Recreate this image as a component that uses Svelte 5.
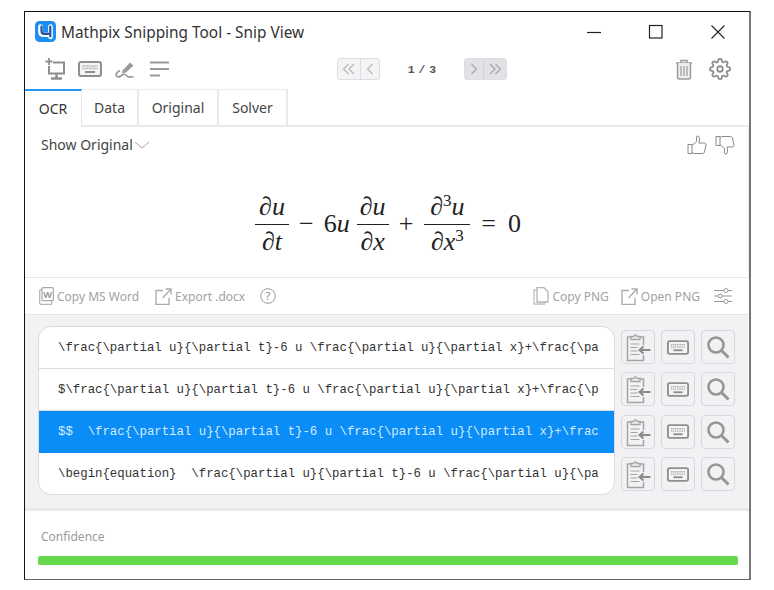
<script>
  const rows = [
    { text: "\\frac{\\partial u}{\\partial t}-6 u \\frac{\\partial u}{\\partial x}+\\frac{\\pa", active: false },
    { text: "$\\frac{\\partial u}{\\partial t}-6 u \\frac{\\partial u}{\\partial x}+\\frac{\\p", active: false },
    { text: "$$  \\frac{\\partial u}{\\partial t}-6 u \\frac{\\partial u}{\\partial x}+\\frac", active: true },
    { text: "\\begin{equation}  \\frac{\\partial u}{\\partial t}-6 u \\frac{\\partial u}{\\pa", active: false }
  ];
  const tabs = ["OCR", "Data", "Original", "Solver"];
</script>

{#snippet keyboard(w, h)}
  <svg width={w} height={h} viewBox="0 0 24 16" class="ic">
    <rect x="1" y="1" width="22" height="14" rx="2" fill="#f4f4f6" stroke="#8e8e8e" stroke-width="2"/>
    <path d="M4.500 5h15M4.500 7.500h15" stroke="#a5a5a5" stroke-width="1.400" stroke-dasharray="1.200 .8"/>
    <path d="M7 11h10" stroke="#8e8e8e" stroke-width="2"/>
  </svg>
{/snippet}

<div class="window">
  <header class="title">
    <svg width="21" height="21" viewBox="0 0 21 21" class="logo">
      <rect width="21" height="21" rx="4.500" fill="#1e8ff2"/>
      <path d="M5.500 5.500v5q0 3.200 3.200 3.200h7M15.500 5.500V16" fill="none" stroke="#fff" stroke-width="4.600" stroke-linecap="round"/>
      <path d="M6.500 5.500v4.500q0 2.800 2.800 2.800h6M15.300 5.500V15.500" fill="none" stroke="#27529e" stroke-width="2.200" stroke-linecap="round"/>
    </svg>
    <span class="title-text">Mathpix Snipping Tool - Snip View</span>
    <div class="win-btns">
      <svg width="16" height="16" viewBox="0 0 16 16"><path d="M1 8.500h14" stroke="#222" stroke-width="1.200"/></svg>
      <svg width="16" height="16" viewBox="0 0 16 16"><rect x="1.500" y="1.500" width="12.500" height="12.500" fill="none" stroke="#222" stroke-width="1.200"/></svg>
      <svg width="16" height="16" viewBox="0 0 16 16"><path d="M1.500 1.500l13 13M14.500 1.500l-13 13" stroke="#222" stroke-width="1.100"/></svg>
    </div>
  </header>

  <div class="toolbar">
    <div class="tools">
      <svg width="21" height="22" viewBox="0 0 21 22">
        <path d="M5 0v7M1.500 3.500h7" stroke="#8e8e8e" stroke-width="1.800"/>
        <path d="M9 4.500h11v11H5V8" fill="none" stroke="#8e8e8e" stroke-width="2"/>
        <path d="M12.500 15.500v4M7 20.500h11" stroke="#8e8e8e" stroke-width="2.400"/>
      </svg>
      {@render keyboard(24, 16)}
      <svg width="20" height="20" viewBox="0 0 20 20">
        <path d="M7.500 11.500L15 3.500l3.500 3-7.500 7-4 1z" fill="#9a9a9a"/>
        <path d="M5 11.500Q0 14 1.500 17q2 2 5-.5t5 0 7 1" fill="none" stroke="#9a9a9a" stroke-width="1.700"/>
      </svg>
      <svg width="20" height="16" viewBox="0 0 20 16" class="lines">
        <path d="M0 1.500h19M0 8h19M0 14.500h10" stroke="#9a9a9a" stroke-width="2"/>
      </svg>
    </div>
    <div class="pager">
      <div class="pgroup">
        <span class="pb wide"><svg width="14" height="12" viewBox="0 0 14 12"><path d="M6.500 1L1.500 6l5 5M12 1L7 6l5 5" fill="none" stroke="#b5b5b5" stroke-width="1.100"/></svg></span>
        <span class="pb"><svg width="8" height="12" viewBox="0 0 8 12"><path d="M6.500 1L1.500 6l5 5" fill="none" stroke="#b5b5b5" stroke-width="1.100"/></svg></span>
      </div>
      <span class="count">1 / 3</span>
      <div class="pgroup on">
        <span class="pb"><svg width="8" height="12" viewBox="0 0 8 12"><path d="M1.500 1l5 5-5 5" fill="none" stroke="#a5a5a5" stroke-width="1.100"/></svg></span>
        <span class="pb wide"><svg width="14" height="12" viewBox="0 0 14 12"><path d="M2 1l5 5-5 5M7.500 1l5 5-5 5" fill="none" stroke="#a5a5a5" stroke-width="1.100"/></svg></span>
      </div>
    </div>
    <div class="tools right">
      <svg width="18" height="22" viewBox="0 0 18 22">
        <path d="M1 5h16M6 5V2.500h6V5" fill="none" stroke="#9a9a9a" stroke-width="1.500"/>
        <path d="M2.500 5v14q0 2 2 2h9q2 0 2-2V5" fill="#eee" stroke="#9a9a9a" stroke-width="1.500"/>
        <path d="M6 8v10M9 8v10M12 8v10" stroke="#9a9a9a" stroke-width="1.200"/>
      </svg>
      <svg width="22" height="22" viewBox="0 0 24 24" fill="none" stroke="#8e8e8e" stroke-width="2">
        <circle cx="12" cy="12" r="3"/>
        <path d="M19.400 15a1.650 1.650 0 0 0 .33 1.820l.06.06a2 2 0 0 1 0 2.830 2 2 0 0 1-2.830 0l-.06-.06a1.650 1.650 0 0 0-1.820-.33 1.650 1.650 0 0 0-1 1.510V21a2 2 0 0 1-2 2 2 2 0 0 1-2-2v-.09A1.650 1.650 0 0 0 9 19.400a1.650 1.650 0 0 0-1.820.33l-.06.06a2 2 0 0 1-2.830 0 2 2 0 0 1 0-2.830l.06-.06a1.650 1.650 0 0 0 .33-1.820 1.650 1.650 0 0 0-1.510-1H3a2 2 0 0 1-2-2 2 2 0 0 1 2-2h.09A1.650 1.650 0 0 0 4.600 9a1.650 1.650 0 0 0-.33-1.820l-.06-.06a2 2 0 0 1 0-2.830 2 2 0 0 1 2.830 0l.06.06a1.650 1.650 0 0 0 1.820.33H9a1.650 1.650 0 0 0 1-1.510V3a2 2 0 0 1 2-2 2 2 0 0 1 2 2v.09a1.650 1.650 0 0 0 1 1.510 1.650 1.650 0 0 0 1.820-.33l.06-.06a2 2 0 0 1 2.830 0 2 2 0 0 1 0 2.830l-.06.06a1.650 1.650 0 0 0-.33 1.820V9a1.650 1.650 0 0 0 1.510 1H21a2 2 0 0 1 2 2 2 2 0 0 1-2 2h-.09a1.650 1.650 0 0 0-1.510 1z"/>
      </svg>
    </div>
  </div>

  <nav class="tabs">
    {#each tabs as tab, i}
      <span class="tab t{i}" class:active={i === 0}>{tab}</span>
    {/each}
  </nav>

  <section class="preview">
    <div class="show-row">
      <span class="show">Show Original</span>
      <svg width="16" height="8" viewBox="0 0 16 8" class="chev"><path d="M1 1l7 6 7-6" fill="none" stroke="#aaa" stroke-width="1"/></svg>
      <div class="thumbs">
        <svg width="20" height="20" viewBox="0 0 20 20"><path d="M1 9.500h4v9H1zM5 10.500l4.500-4V2q0-1 1.300-1 1.700 0 1.700 3l-.5 4h5.500q1.500 0 1.500 1.500l-1.500 7.500q-.5 1.500-2 1.500H8q-2 0-3-1" fill="none" stroke="#8a8a8a" stroke-width="1"/></svg>
        <svg width="20" height="20" viewBox="0 0 20 20"><path d="M1 1.500h4v9H1zM5 9.500l4.500 4V18q0 1 1.300 1 1.700 0 1.700-3l-.5-4h5.500q1.500 0 1.500-1.500L17.500 3q-.5-1.500-2-1.500H8q-2 0-3 1" fill="none" stroke="#8a8a8a" stroke-width="1"/></svg>
      </div>
    </div>
    <div class="math">
      <span class="frac f1"><span><i>∂u</i></span><span><i>∂t</i></span></span>
      <span class="op minus">−</span>
      <span class="term">6<i>u</i></span>
      <span class="frac f2"><span><i>∂u</i></span><span><i>∂x</i></span></span>
      <span class="op plus">+</span>
      <span class="frac f3"><span><i>∂</i><sup>3</sup><i>u</i></span><span><i>∂x</i><sup>3</sup></span></span>
      <span class="op eq">=</span>
      <span class="term">0</span>
    </div>
  </section>

  <div class="actions">
    <span class="act first">
      <svg width="15" height="18" viewBox="0 0 15 18"><rect x=".7" y="2.500" width="12" height="15" rx="1.500" fill="none" stroke="#b5b5b5" stroke-width="1.300"/><rect x="3" y=".7" width="11.300" height="13" rx="1" fill="#fff" stroke="#a8a8a8" stroke-width="1.200"/><text x="8.700" y="11" class="w">W</text></svg>
      Copy MS Word
    </span>
    <span class="act export">
      <svg width="17" height="17" viewBox="0 0 17 17"><path d="M8 2.500H1v14h13V10M7.500 10L16 1M10.500 1H16v5.500" fill="none" stroke="#adadad" stroke-width="1.400"/></svg>
      Export .docx
    </span>
    <svg width="16" height="16" viewBox="0 0 16 16" class="help"><circle cx="8" cy="8" r="7.300" fill="none" stroke="#999" stroke-width="1"/><text x="8" y="11.500" class="q">?</text></svg>
    <span class="act push">
      <svg width="16" height="18" viewBox="0 0 16 18"><path d="M4.500 3H1v14h10.500v-2" fill="none" stroke="#c0c0c0" stroke-width="1.300"/><path d="M4 .7h7l4 4V15H4z" fill="#fff" stroke="#b5b5b5" stroke-width="1.300"/></svg>
      Copy PNG
    </span>
    <span class="act open">
      <svg width="17" height="17" viewBox="0 0 17 17"><path d="M8 2.500H1v14h13V10M7.500 10L16 1M10.500 1H16v5.500" fill="none" stroke="#adadad" stroke-width="1.400"/></svg>
      Open PNG
    </span>
    <svg width="18" height="16" viewBox="0 0 18 16" class="sliders">
      <path d="M0 2.500h10M14 2.500h4M0 8h4M8 8h10M0 13.500h10M14 13.500h4" stroke="#999" stroke-width="1"/>
      <circle cx="12" cy="2.500" r="2" fill="none" stroke="#999"/><circle cx="6" cy="8" r="2" fill="none" stroke="#999"/><circle cx="12" cy="13.500" r="2" fill="none" stroke="#999"/>
    </svg>
  </div>

  <section class="results">
    <div class="list">
      {#each rows as row}
        <div class="row" class:active={row.active}>{row.text}</div>
      {/each}
    </div>
    <div class="btns">
      {#each rows as row}
        <div class="btn-row">
          <span class="ibtn">
            <svg width="26" height="30" viewBox="0 0 26 30">
              <path d="M6.500 5H2.500v23.500h16V23M18.500 13V5h-4" fill="none" stroke="#a5a5a5" stroke-width="1.500"/>
              <path d="M6 7.500V4.500h3q1.500-3.500 3 0h3v3z" fill="#f0f0f2" stroke="#a5a5a5" stroke-width="1.300"/>
              <path d="M5.500 12h9M5.500 15.500h7M5.500 19h7M5.500 22.500h9" stroke="#a5a5a5" stroke-width="1.200"/>
              <path d="M25.500 18H14.500M18.500 14.500l-4 3.500 4 3.500" fill="none" stroke="#8a8a8a" stroke-width="2"/>
            </svg>
          </span>
          <span class="ibtn">{@render keyboard(22, 15)}</span>
          <span class="ibtn">
            <svg width="24" height="24" viewBox="0 0 24 24">
              <circle cx="10" cy="10" r="7.500" fill="none" stroke="#969696" stroke-width="2.600"/>
              <path d="M15.500 15.500L22.500 22.500" stroke="#969696" stroke-width="3"/>
            </svg>
          </span>
        </div>
      {/each}
    </div>
  </section>

  <section class="conf">
    <div class="conf-label">Confidence</div>
    <div class="bar"></div>
  </section>
</div>

<style>
  :global(body) { margin: 0; background: #fff; }
  .window {
    box-sizing: border-box;
    width: 727px;
    height: 569px;
    margin: 11px 0 0 24px;
    border: 1px solid #111;
    border-right: 2px solid #777;
    border-bottom: 1px solid #666;
    background: #fff;
    font-family: "Noto Sans", sans-serif;
    color: #333;
    display: flex;
    flex-direction: column;
    overflow: hidden;
  }
  svg { display: block; flex: none; }
  .title {
    height: 37px;
    flex: none;
    display: flex;
    align-items: center;
    padding: 0 23px 0 10px;
    box-sizing: border-box;
  }
  .logo { margin-top: 2px; }
  .title-text { margin: 3px 0 0 5px; font-size: 15.400px; color: #333; }
  .win-btns { margin: 2px 0 0 auto; display: flex; gap: 46px; }
  .toolbar {
    height: 40px;
    flex: none;
    display: flex;
    align-items: center;
    padding: 0 18px 0 19px;
  }
  .tools { display: flex; align-items: center; gap: 13px; }
  .tools .lines { margin-left: 2px; }
  .tools.right { margin-left: auto; gap: 16px; }
  .pager { display: flex; align-items: center; margin-left: 167px; }
  .pgroup {
    display: flex;
    height: 22px;
    box-sizing: border-box;
    border: 1px solid #dedee2;
    border-radius: 3px;
    background: #f4f4f6;
  }
  .pgroup.on { background: #e2e2e6; }
  .pb { display: flex; align-items: center; justify-content: center; width: 18px; }
  .pb.wide { width: 22px; border-right: 1px solid #dedee2; }
  .pgroup.on .pb.wide { border-right: 0; border-left: 1px solid #d4d4d8; }
  .count {
    width: 84px;
    text-align: center;
    font-family: "Liberation Mono", monospace;
    font-size: 11.500px;
    font-weight: 700;
    word-spacing: -3px;
    color: #555;
  }
  .tabs {
    display: flex;
    height: 38px;
    flex: none;
    box-sizing: border-box;
    border-bottom: 2px solid #e9e9ec;
  }
  .tab {
    box-sizing: border-box;
    height: 36px;
    display: flex;
    align-items: center;
    justify-content: center;
    font-size: 14px;
    color: #444;
    border-top: 1px solid #eee;
    border-right: 2px solid #e9e9ec;
  }
  .t0 { width: 57px; }
  .t1 { width: 57px; }
  .t2 { width: 80px; }
  .t3 { width: 69px; }
  .tab.active {
    border-top: 2px solid #2196f3;
    color: #333;
    border-right: 1px solid #e9e9ec;
    height: 38px;
    padding-bottom: 2px;
    background: #fff;
  }
  .preview { height: 150px; flex: none; border-right: 1px solid #eee; }
  .show-row {
    box-sizing: border-box;
    display: flex;
    align-items: center;
    padding: 0 13px 0 16px;
    height: 35px;
  }
  .show { font-size: 14px; color: #444; }
  .chev { margin-left: 1px; margin-top: 1px; }
  .thumbs { margin-left: auto; display: flex; gap: 8px; }
  .math {
    display: flex;
    align-items: center;
    justify-content: center;
    height: 115px;
    padding: 9px 0 0 3px;
    box-sizing: border-box;
    font-family: "Liberation Serif", serif;
    font-size: 26px;
    color: #222;
  }
  .frac { display: inline-flex; flex-direction: column; align-items: center; }
  .frac > span {
    display: block;
    width: 100%;
    line-height: 34px;
    white-space: nowrap;
    text-align: center;
    box-sizing: border-box;
  }
  .frac > span:first-child { border-bottom: 1.500px solid #222; }
  .frac sup { font-size: 17px; line-height: 0; vertical-align: 9px; }
  .f1 { width: 34px; }
  .f2 { width: 32px; margin-left: 7px; }
  .f3 { width: 46px; }
  .op { display: block; }
  .minus { margin: 0 10px; }
  .plus { margin: 0 11px 0 10px; }
  .eq { margin: 0 12px 0 11px; }
  .actions {
    height: 38px;
    flex: none;
    box-sizing: border-box;
    border-top: 1px solid #e6e6e8;
    border-bottom: 1px solid #e6e6e8;
    display: flex;
    align-items: center;
    padding: 0 17px 0 14px;
    font-size: 12px;
    color: #a2a2a2;
  }
  .act { display: flex; align-items: center; gap: 3px; white-space: nowrap; }
  .act.export { margin-left: 16px; }
  .act.push { margin-left: auto; }
  .act.open { margin-left: 12px; }
  .help { margin-left: 15px; }
  .sliders { margin-left: 14px; }
  .w { font-size: 9px; font-weight: 700; fill: #999; text-anchor: middle; font-family: "Noto Sans", sans-serif; }
  .q { font-size: 11px; fill: #888; text-anchor: middle; font-family: "Noto Sans", sans-serif; }
  .results {
    height: 193px;
    flex: none;
    box-sizing: border-box;
    background: #f2f2f5;
    padding: 11px 12px 0 13px;
    display: flex;
    gap: 6px;
    margin-right: 1px;
  }
  .list {
    width: 577px;
    height: 169px;
    box-sizing: border-box;
    flex: none;
    background: #fff;
    border: 1px solid #dcdce0;
    border-radius: 13px;
    overflow: hidden;
  }
  .row {
    box-sizing: border-box;
    height: 42px;
    display: flex;
    align-items: center;
    padding-left: 19px;
    font-family: "Liberation Mono", monospace;
    font-size: 12.350px;
    color: #333;
    white-space: pre;
    overflow: hidden;
    border-bottom: 1px solid #dcdce0;
  }
  .row:last-child { border-bottom: 0; }
  .row.active { background: #0a8df7; color: #d5ecff; border-bottom-color: #0a8df7; }
  .btns { display: flex; flex-direction: column; gap: 8.400px; padding-top: 4px; }
  .btn-row { display: flex; gap: 6px; }
  .ibtn {
    box-sizing: border-box;
    width: 34px;
    height: 34px;
    border: 1.500px solid #d8d8dc;
    border-radius: 4px;
    background: #f2f2f5;
    display: flex;
    align-items: center;
    justify-content: center;
  }
  .conf {
    flex: 1;
    border-top: 3px solid #e9e9ec;
    padding: 18px 11px 0 13px;
  }
  .conf-label { font-size: 12px; color: #9a9a9a; padding-left: 3px; line-height: 16px; }
  .bar { height: 9px; margin-top: 11px; border-radius: 2px; background: #66d94a; }
</style>
